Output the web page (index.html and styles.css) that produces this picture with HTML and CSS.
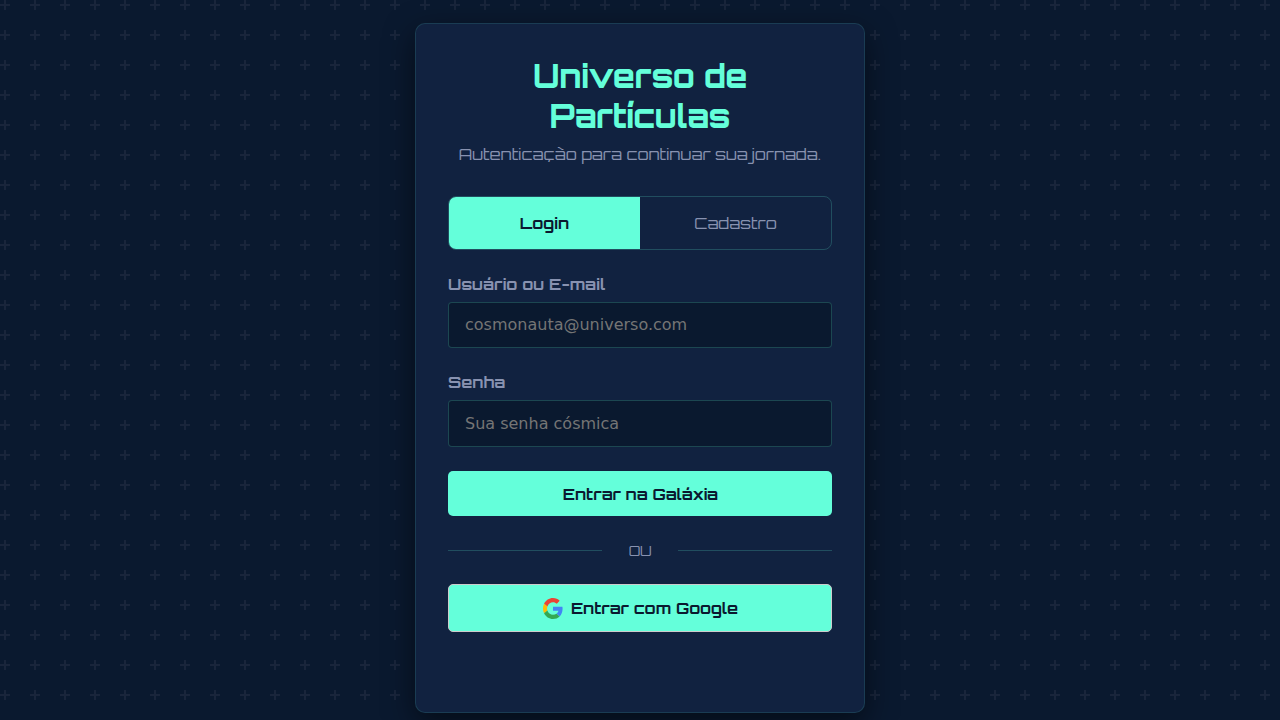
FILE: index.html
```html
<!DOCTYPE html>
<html lang="pt-BR">
<head>
<meta charset="utf-8">
<title>Universo de Partículas</title>
<link rel="stylesheet" href="styles.css">
</head>
<body>
<main class="card">
  <h1 class="title">Universo de<br>Partículas</h1>
  <p class="subtitle">Autenticação para continuar sua<span class="tight"> </span>jornada.</p>
  <div class="tabs">
    <button class="tab active" type="button">Login</button>
    <button class="tab" type="button">Cadastro</button>
  </div>
  <form class="form">
    <label class="label" for="user">Usuário ou E-mail</label>
    <input class="input input-first" id="user" type="text" placeholder="cosmonauta@universo.com">
    <label class="label label-second" for="pass">Senha</label>
    <input class="input input-second" id="pass" type="password" placeholder="Sua senha cósmica">
    <button class="submit" type="button">Entrar na Galáxia</button>
  </form>
  <div class="divider"><span class="line"></span><span class="or">OU</span><span class="line"></span></div>
  <button class="submit google" type="button">
    <svg class="google-icon" viewBox="0 0 48 48" preserveAspectRatio="none">
      <path fill="#EA4335" d="M24 9.5c3.54 0 6.71 1.22 9.21 3.6l6.85-6.85C35.9 2.38 30.47 0 24 0 14.62 0 6.51 5.38 2.56 13.22l7.98 6.19C12.43 13.72 17.74 9.5 24 9.5z"/>
      <path fill="#4285F4" d="M46.98 24.55c0-1.57-.15-3.09-.38-4.55H24v9.02h12.94c-.58 2.96-2.26 5.48-4.78 7.18l7.73 6c4.51-4.18 7.09-10.36 7.09-17.65z"/>
      <path fill="#FBBC05" d="M10.53 28.59c-.48-1.45-.76-2.99-.76-4.59s.27-3.14.76-4.59l-7.98-6.19C.92 16.46 0 20.12 0 24c0 3.88.92 7.54 2.56 10.78l7.97-6.19z"/>
      <path fill="#34A853" d="M24 48c6.48 0 11.93-2.13 15.89-5.81l-7.73-6c-2.15 1.45-4.92 2.3-8.16 2.3-6.26 0-11.57-4.22-13.47-9.91l-7.98 6.19C6.51 42.62 14.62 48 24 48z"/>
    </svg>
    <span>Entrar com Google</span>
  </button>
</main>
</body>
</html>
```
FILE: styles.css
```css
* { box-sizing: border-box; }
body {
  margin: 0;
  height: 720px;
  overflow: hidden;
  display: flex;
  justify-content: center;
  align-items: flex-start;
  padding-top: 23px;
  background-color: #0a192f;
  background-image: url("data:image/svg+xml,%3Csvg width='60' height='60' viewBox='0 0 60 60' xmlns='http://www.w3.org/2000/svg'%3E%3Cpath fill='%239C92AC' fill-opacity='0.1' d='M36 34v-4h-2v4h-4v2h4v4h2v-4h4v-2h-4zm0-30V0h-2v4h-4v2h4v4h2V6h4V4h-4zM6 34v-4H4v4H0v2h4v4h2v-4h4v-2H6zM6 4V0H4v4H0v2h4v4h2V6h4V4H6z'/%3E%3C/svg%3E");
  font-family: Orbitron, "DejaVu Sans", sans-serif;
  color: #8892b0;
}
.card {
  width: 450px;
  height: 690px;
  padding: 32px;
  background: #112240;
  border: 1px solid rgba(100, 255, 218, 0.12);
  border-radius: 10px;
  box-shadow: 0 10px 30px rgba(0, 0, 0, 0.5);
}
.title {
  margin: 0;
  font-size: 32px;
  line-height: 40px;
  font-weight: 800;
  letter-spacing: -0.18px;
  text-align: center;
  color: #64ffda;
}
.subtitle {
  margin: 8px 0 0;
  height: 20px;
  font-size: 16px;
  line-height: 20px;
  font-weight: 400;
  letter-spacing: -0.01px;
  text-align: center;
  white-space: nowrap;
}
.tight { letter-spacing: -1.2px; }
.tabs {
  display: flex;
  height: 54px;
  margin-top: 32px;
  border: 1px solid rgba(100, 255, 218, 0.2);
  border-radius: 8px;
  overflow: hidden;
}
.tab {
  flex: 1;
  border: 0;
  padding: 0;
  background: transparent;
  font: 400 16px/20px Orbitron, "DejaVu Sans", sans-serif;
  color: #8892b0;
}
.tab.active { background: #64ffda; color: #0a192f; font-weight: 700; }
.form { display: flex; flex-direction: column; margin-top: 24px; }
.label { height: 20px; font-size: 16px; line-height: 20px; font-weight: 700; margin-bottom: 8px; letter-spacing: 0.04px; white-space: nowrap; }
.label-second { margin-top: 24px; }
.input {
  height: 46px;
  padding: 0 16px;
  border: 1px solid rgba(100, 255, 218, 0.2);
  border-radius: 4px;
  background: #0a192f;
  font: 16px "DejaVu Sans", sans-serif;
}
.input-first { padding-bottom: 2px; }
.input-second { height: 47px; }
.input::placeholder { color: #757575; }
.submit {
  display: flex;
  align-items: center;
  justify-content: center;
  width: 100%;
  height: 45px;
  margin-top: 24px;
  padding: 0 0 0 1px;
  border: 0;
  border-radius: 5px;
  background: #64ffda;
  color: #0a192f;
  font: 700 16px/20px Orbitron, "DejaVu Sans", sans-serif;
  letter-spacing: -0.05px;
  white-space: nowrap;
}
.divider { display: flex; align-items: center; justify-content: space-between; height: 20px; margin-top: 24px; }
.line { width: 154px; height: 1px; background: rgba(100, 255, 218, 0.2); }
.or { font-size: 14px; line-height: 18px; padding-top: 1px; letter-spacing: -0.3px; }
.google { height: 48px; border: 1px solid #ccc; gap: 8px; }
.google-icon { width: 20px; height: 21px; }
```
